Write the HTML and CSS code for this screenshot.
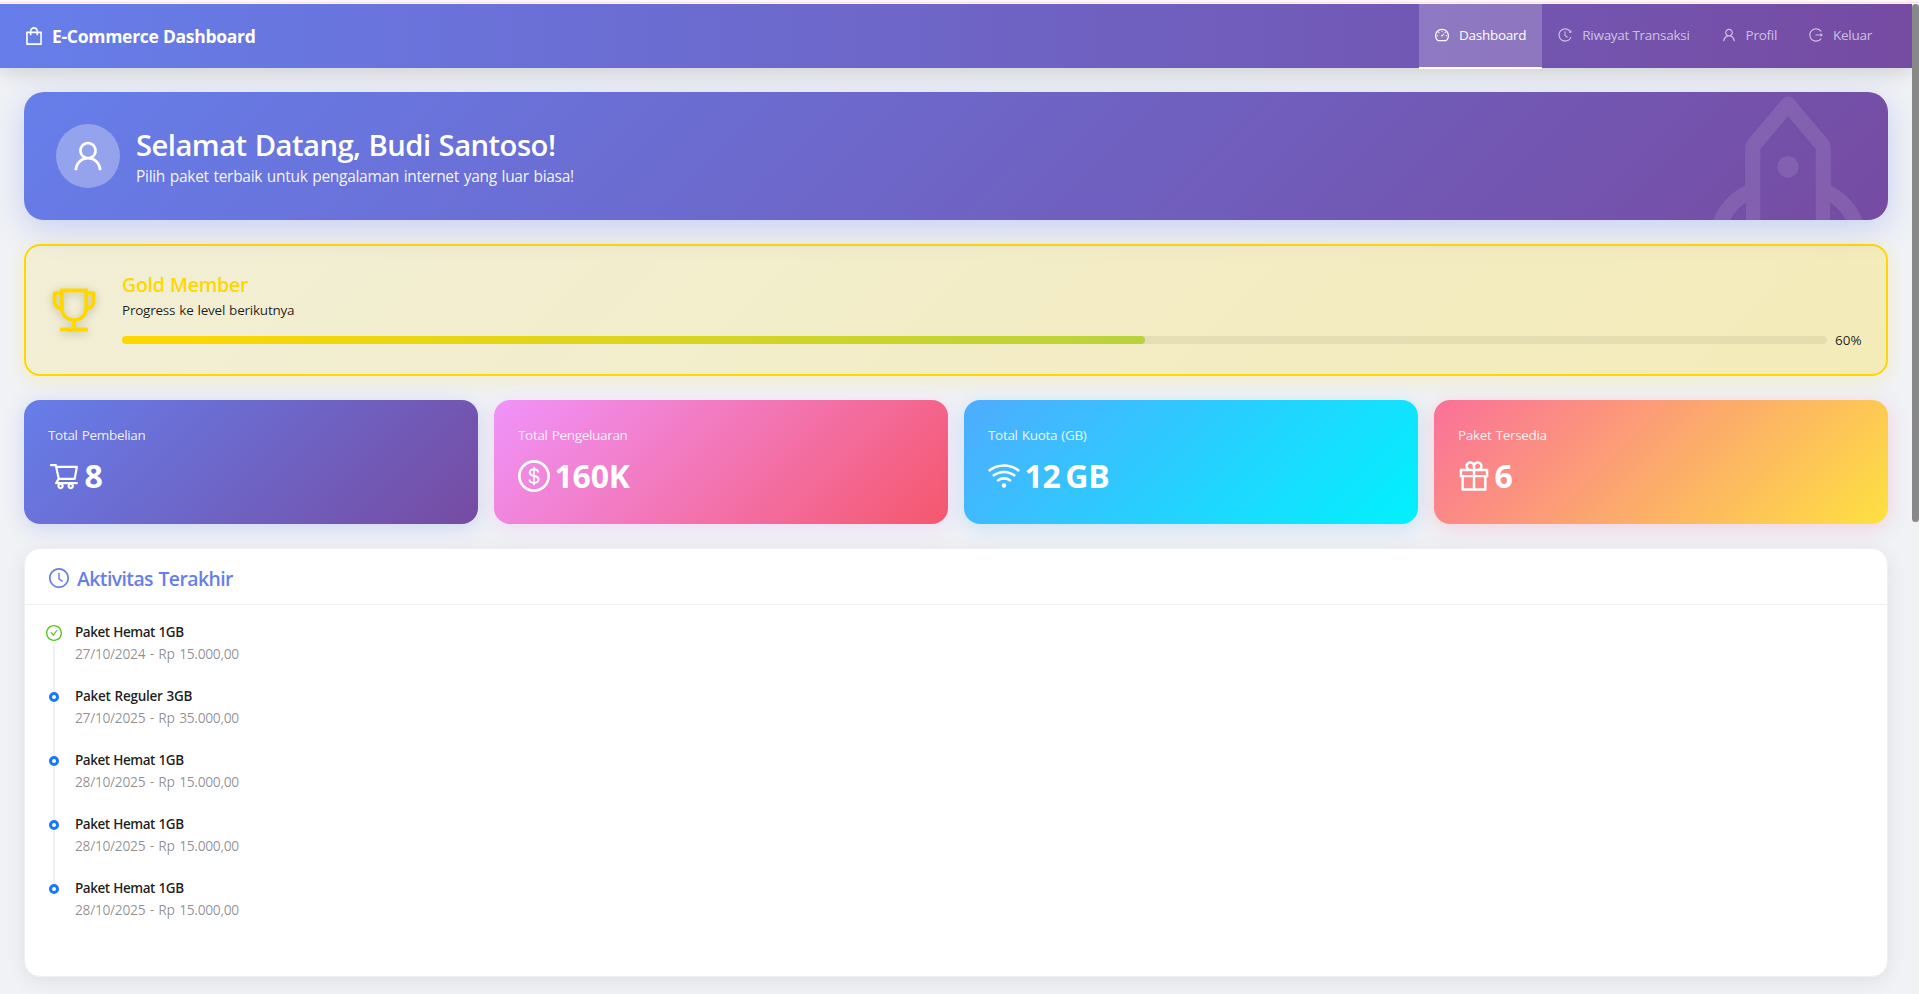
FILE: index.html
```
<!DOCTYPE html>
<html lang="id">
<head>
<meta charset="utf-8">
<title>E-Commerce Dashboard</title>
<link rel="stylesheet" href="styles.css">
</head>
<body>
<div class="topline"></div>
<div class="viewport">
  <div class="page">
    <header class="header">
      <div class="brand">
        <svg class="icon icon-20" viewBox="64 64 896 896"><path d="M832 312H696v-16c0-101.6-82.4-184-184-184s-184 82.4-184 184v16H192c-17.7 0-32 14.3-32 32v536c0 17.7 14.3 32 32 32h640c17.7 0 32-14.3 32-32V344c0-17.7-14.3-32-32-32zm-432-16c0-61.9 50.1-112 112-112s112 50.1 112 112v16H400v-16zm392 544H232V384h96v88c0 4.400 3.600 8 8 8h56c4.400 0 8-3.600 8-8v-88h224v88c0 4.400 3.600 8 8 8h56c4.400 0 8-3.600 8-8v-88h96v456z"/></svg>
        <span>E-Commerce Dashboard</span>
      </div>
      <nav class="menu">
        <a class="menu-item active">
          <svg class="icon icon-14" viewBox="64 64 896 896"><path d="M924.8 385.6a446.700 446.700 0 00-96-142.400 446.700 446.700 0 00-142.400-96C631.100 123.800 572.500 112 512 112s-119.100 11.800-174.400 35.200a446.700 446.700 0 00-142.400 96 446.700 446.700 0 00-96 142.400C75.800 440.900 64 499.500 64 560c0 132.700 58.300 257.700 159.900 343.100l1.700 1.400c5.800 4.800 13.100 7.500 20.600 7.500h531.700c7.500 0 14.800-2.700 20.600-7.500l1.700-1.400C901.700 817.700 960 692.700 960 560c0-60.500-11.900-119.100-35.200-174.400zM761.400 836H262.600A371.120 371.120 0 01140 560c0-99.400 38.700-192.800 109-263 70.300-70.300 163.700-109 263-109 99.400 0 192.800 38.700 263 109 70.300 70.300 109 163.700 109 263 0 105.600-44.500 205.500-122.600 276zM623.500 421.500a8.030 8.030 0 00-11.300 0L527.700 506c-18.700-5-39.400-.2-54.100 14.500a55.950 55.950 0 000 79.200 55.950 55.950 0 0079.200 0 55.870 55.870 0 0014.500-54.100l84.500-84.500c3.100-3.100 3.100-8.200 0-11.300l-28.300-28.300zM490 320h44c4.400 0 8-3.600 8-8v-80c0-4.400-3.600-8-8-8h-44c-4.400 0-8 3.600-8 8v80c0 4.400 3.600 8 8 8zm260 218v44c0 4.400 3.600 8 8 8h80c4.400 0 8-3.600 8-8v-44c0-4.400-3.600-8-8-8h-80c-4.400 0-8 3.600-8 8zm12.700-197.200l-31.100-31.100a8.030 8.030 0 00-11.300 0l-56.600 56.600a8.030 8.030 0 000 11.300l31.100 31.100c3.100 3.100 8.200 3.100 11.300 0l56.600-56.600c3.100-3.100 3.100-8.200 0-11.300zm-458.600-31.100a8.030 8.030 0 00-11.300 0l-31.100 31.100a8.030 8.030 0 000 11.300l56.600 56.600c3.100 3.100 8.200 3.100 11.300 0l31.100-31.100c3.100-3.100 3.100-8.200 0-11.300l-56.600-56.600zM262 530h-80c-4.400 0-8 3.600-8 8v44c0 4.400 3.600 8 8 8h80c4.400 0 8-3.600 8-8v-44c0-4.400-3.600-8-8-8z"/></svg>
          <span>Dashboard</span>
        </a>
        <a class="menu-item">
          <svg class="icon icon-14" viewBox="64 64 896 896"><path d="M536.1 273H488c-4.400 0-8 3.600-8 8v275.300c0 2.600 1.200 5 3.300 6.500l165.300 120.700c3.600 2.600 8.600 1.900 11.200-1.700l28.600-39c2.700-3.700 1.900-8.700-1.700-11.200L544.100 528.500V281c0-4.400-3.600-8-8-8zm219.800 75.200l156.800 38.300c5 1.200 9.900-2.600 9.900-7.700l.8-161.500c0-6.700-7.700-10.500-12.900-6.300L752.900 334.100a8 8 0 003 14.100zm167.700 301.100l-56.700-19.500a8 8 0 00-10.100 4.800c-1.900 5.100-3.900 10.100-6 15.100-17.800 42.100-43.300 80-75.900 112.500a353 353 0 01-112.500 75.900 352.180 352.180 0 01-137.700 27.800c-47.800 0-94.100-9.300-137.700-27.800a353 353 0 01-112.500-75.900c-32.500-32.500-58-70.400-75.900-112.500A353.440 353.440 0 01171 512c0-47.800 9.300-94.200 27.800-137.800 17.800-42.100 43.300-80 75.900-112.500a353 353 0 01112.500-75.900C430.600 167.300 477 158 524.800 158s94.100 9.300 137.700 27.800A353 353 0 01775 261.700c10.200 10.300 19.800 21 28.600 32.300l59.800-46.800C784.700 146.600 662.200 81.900 524.600 82 285 82.100 92.600 276.700 95 516.400 97.400 751.900 288.900 942 524.800 942c185.500 0 343.500-117.600 403.700-282.300 1.500-4.200-.7-8.900-4.900-10.400z"/></svg>
          <span>Riwayat Transaksi</span>
        </a>
        <a class="menu-item">
          <svg class="icon icon-14" viewBox="64 64 896 896"><use href="#user"/></svg>
          <span>Profil</span>
        </a>
        <a class="menu-item">
          <svg class="icon icon-14" viewBox="64 64 896 896"><path d="M868 732h-70.300c-4.800 0-9.300 2.100-12.300 5.800-7 8.500-14.500 16.700-22.400 24.500a353.840 353.840 0 01-112.700 75.900A352.800 352.800 0 01512.400 866c-47.900 0-94.300-9.400-137.900-27.800a353.840 353.840 0 01-112.700-75.900 353.280 353.280 0 01-76-112.500C167.300 606.200 158 559.900 158 512s9.400-94.200 27.800-137.800c17.800-42.100 43.400-80 76-112.500s70.500-58.100 112.700-75.900c43.600-18.400 90-27.800 137.900-27.800 47.900 0 94.300 9.300 137.900 27.800 42.200 17.800 80.100 43.400 112.700 75.900 7.900 7.900 15.300 16.100 22.400 24.500 3 3.700 7.600 5.800 12.300 5.800H868c6.300 0 10.200-7 6.700-12.300C798 160.500 663.800 81.600 511.300 82 271.700 82.600 79.600 277.100 82 516.400 84.400 751.900 276.200 942 512.400 942c152.100 0 285.700-78.800 362.300-197.700 3.400-5.300-.4-12.300-6.700-12.300zm88.900-226.300L815 393.700c-5.300-4.200-13-.4-13 6.300v76H488c-4.400 0-8 3.600-8 8v56c0 4.400 3.600 8 8 8h314v76c0 6.700 7.800 10.500 13 6.300l141.900-112a8 8 0 000-12.600z"/></svg>
          <span>Keluar</span>
        </a>
      </nav>
    </header>

    <main class="content">
      <section class="welcome">
        <svg class="rocket" viewBox="64 64 896 896"><path fill-rule="evenodd" d="M864 736c0-111.600-65.400-208-160-252.900V317.300c0-15.100-5.300-29.700-15.100-41.200L536.500 95.400C530.100 87.800 521 84 512 84s-18.100 3.800-24.500 11.400L335.100 276.100a63.970 63.970 0 00-15.100 41.200v165.800C225.400 528 160 624.400 160 736h704zM762.300 621.400c9.400 14.600 17 30.300 22.500 46.600H700V558.700a211.600 211.600 0 0162.300 62.700zM388 483.100V318.800l124-147 124 147V668H388V483.100zM239.200 668c5.500-16.300 13.100-32 22.500-46.600 16.300-25.200 37.500-46.500 62.300-62.700V668h-84.800zM464 400a48 48 0 1096 0 48 48 0 10-96 0z"/></svg>
        <div class="avatar">
          <svg class="icon icon-32" viewBox="64 64 896 896"><path id="user" d="M858.500 763.600a374 374 0 00-80.600-119.500 375.630 375.630 0 00-119.500-80.600c-.4-.2-.8-.3-1.200-.5C719.500 518 760 444.700 760 362c0-137-111-248-248-248S264 225 264 362c0 82.700 40.500 156 102.800 201.100-.4.2-.8.3-1.200.5-44.800 18.900-85 46-119.500 80.600a375.630 375.630 0 00-80.600 119.500A371.700 371.700 0 00136 901.800a8 8 0 008 8.200h60c4.400 0 7.900-3.500 8-7.800 2-77.200 33-149.500 87.800-204.300 56.700-56.700 132-87.900 212.200-87.900s155.500 31.200 212.200 87.900C779 752.700 810 825 812 902.200c.1 4.400 3.600 7.800 8 7.800h60a8 8 0 008-8.200c-1-47.800-10.900-94.300-29.500-138.200zM512 534c-45.900 0-89.100-17.900-121.600-50.400S340 407.900 340 362c0-45.900 17.900-89.100 50.400-121.600S466.100 190 512 190s89.100 17.900 121.600 50.400S684 316.100 684 362c0 45.900-17.900 89.100-50.400 121.600S557.900 534 512 534z"/></svg>
        </div>
        <div>
          <h1 class="welcome-title">Selamat Datang, Budi Santoso!</h1>
          <p class="welcome-text">Pilih paket terbaik untuk pengalaman internet yang luar biasa!</p>
        </div>
      </section>

      <section class="member">
        <svg class="icon trophy" viewBox="64 64 896 896"><path d="M868 160h-92v-40c0-4.400-3.600-8-8-8H256c-4.400 0-8 3.600-8 8v40h-92a44 44 0 00-44 44v148c0 81.700 60 149.600 138.200 162C265.700 630.200 359 721.700 476 734.500v105.200H280c-17.700 0-32 14.300-32 32V904c0 4.400 3.600 8 8 8h512c4.400 0 8-3.600 8-8v-32.300c0-17.700-14.300-32-32-32H548V734.500C665 721.700 758.300 630.200 773.800 514 852 501.600 912 433.700 912 352V204a44 44 0 00-44-44zM184 352V232h64v207.600a91.990 91.990 0 01-64-87.600zm520 128c0 49.100-19.100 95.400-53.900 130.100-34.800 34.800-81 53.900-130.100 53.900h-16c-49.100 0-95.400-19.100-130.100-53.900-34.800-34.800-53.900-81-53.900-130.100V184h384v296zm136-128c0 41-26.900 75.800-64 87.600V232h64v120z"/></svg>
        <div class="member-body">
          <h2 class="member-title">Gold Member</h2>
          <p class="member-text">Progress ke level berikutnya</p>
          <div class="progress">
            <div class="progress-track"><div class="progress-fill" style="width:60%"></div></div>
            <span class="progress-value">60%</span>
          </div>
        </div>
      </section>

      <section class="stats">
        <div class="stat purple">
          <p class="stat-label">Total Pembelian</p>
          <div class="stat-value">
            <svg class="icon icon-32" viewBox="0 0 1024 1024"><path d="M922.900 701.900H327.400l29.900-60.900 496.800-.9c16.800 0 31.200-12 34.200-28.600l68.800-385.100c1.800-10.100-.9-20.500-7.500-28.400a34.990 34.990 0 00-26.600-12.500l-632-2.100-5.400-25.400c-3.400-16.200-18-28-34.600-28H96.500a35.300 35.300 0 100 70.600h125.900L246 312.800l58.100 281.300-74.800 122.100a34.960 34.960 0 00-3 36.800c6 11.900 18.100 19.400 31.500 19.400h62.800a102.430 102.430 0 00-20.600 61.700c0 56.600 46 102.600 102.600 102.600s102.600-46 102.600-102.600c0-22.300-7.400-44-20.600-61.700h161.100a102.430 102.430 0 00-20.600 61.700c0 56.600 46 102.600 102.600 102.600s102.600-46 102.600-102.600c0-22.300-7.400-44-20.600-61.700H923c19.400 0 35.300-15.800 35.300-35.300a35.420 35.420 0 00-35.400-35.200zM305.700 253l575.800 1.900-56.400 315.800-452.300.8L305.700 253zm96.900 612.700c-17.400 0-31.600-14.200-31.600-31.600 0-17.400 14.200-31.600 31.600-31.600s31.600 14.200 31.600 31.600a31.600 31.600 0 01-31.600 31.600zm325.100 0c-17.400 0-31.600-14.200-31.600-31.600 0-17.400 14.200-31.600 31.600-31.600s31.600 14.200 31.600 31.600a31.600 31.600 0 01-31.600 31.600z"/></svg>
            <span>8</span>
          </div>
        </div>
        <div class="stat pink">
          <p class="stat-label">Total Pengeluaran</p>
          <div class="stat-value">
            <svg class="icon icon-32" viewBox="64 64 896 896"><path d="M512 64C264.600 64 64 264.600 64 512s200.600 448 448 448 448-200.600 448-448S759.400 64 512 64zm0 820c-205.400 0-372-166.600-372-372s166.600-372 372-372 372 166.600 372 372-166.600 372-372 372zm47.700-395.200l-25.400-5.900V348.600c38 5.200 61.500 29 65.500 58.200.5 4 3.900 6.900 7.900 6.900h44.900c4.700 0 8.400-4.100 8-8.800-6.100-62.300-57.400-102.300-125.900-109.200V263c0-4.400-3.600-8-8-8h-28.100c-4.400 0-8 3.600-8 8v33c-70.800 6.900-126.200 46-126.200 119 0 67.600 49.800 100.200 102.100 112.700l24.700 6.300v142.700c-44.200-5.900-69-29.500-74.100-61.300-.6-3.800-4-6.600-7.900-6.600H363c-4.700 0-8.400 4-8 8.700 4.500 55 46.200 105.600 135.200 112.100V761c0 4.400 3.600 8 8 8h28.400c4.400 0 8-3.600 8-8.100l-.2-31.700c78.300-6.900 134.300-48.800 134.300-124-.1-69.400-44.200-100.400-109-116.400zm-68.600-16.200c-5.600-1.600-10.300-3.100-15-5-33.800-12.200-49.500-31.900-49.500-57.300 0-36.300 27.500-57 64.500-61.700v124zM534.300 677V543.300c3.100.9 5.900 1.600 8.800 2.200 47.300 14.400 63.200 34.400 63.200 65.100 0 39.100-29.400 62.600-72 66.400z"/></svg>
            <span>160K</span>
          </div>
        </div>
        <div class="stat blue">
          <p class="stat-label">Total Kuota (GB)</p>
          <div class="stat-value">
            <svg class="icon icon-32" viewBox="64 64 896 896"><path d="M723 620.500C666.800 571.600 593.400 542 513 542s-153.800 29.600-210.100 78.600a8.100 8.100 0 00-.8 11.200l36 42.900c2.900 3.400 8 3.800 11.400.9C393.100 637.200 450.300 614 513 614s119.900 23.200 163.500 61.500c3.400 2.900 8.500 2.500 11.400-.9l36-42.900c2.800-3.300 2.400-8.300-.9-11.200zm117.400-140.100C751.700 406.500 637.600 362 513 362s-238.700 44.500-327.500 118.400a8.050 8.050 0 00-1 11.300l36 42.900c2.800 3.400 7.900 3.800 11.200 1C308 472.200 406.100 434 513 434s205 38.200 281.200 101.600c3.400 2.800 8.400 2.400 11.200-1l36-42.900c2.800-3.400 2.400-8.500-1-11.300zm116.700-139C835.700 241.800 680.300 182 511 182c-168.200 0-322.600 59-443.700 157.400a8 8 0 00-1.100 11.400l36 42.900c2.800 3.300 7.800 3.800 11.100 1.100C222 306.300 360.300 254 511 254c151.800 0 291 53.500 400 142.700 3.400 2.800 8.400 2.300 11.200-1.100l36-42.900c2.900-3.400 2.400-8.500-1.100-11.300zM448 778a64 64 0 10128 0 64 64 0 10-128 0z"/></svg>
            <span>12</span><span>GB</span>
          </div>
        </div>
        <div class="stat sunset">
          <p class="stat-label">Paket Tersedia</p>
          <div class="stat-value">
            <svg class="icon icon-32" viewBox="64 64 896 896"><path d="M880 310H732.400c13.600-21.400 21.600-46.800 21.600-74 0-76.100-61.900-138-138-138-41.400 0-78.700 18.400-104 47.400-25.300-29-62.600-47.400-104-47.400-76.100 0-138 61.900-138 138 0 27.200 7.900 52.600 21.600 74H144c-17.700 0-32 14.300-32 32v200c0 4.400 3.600 8 8 8h40v344c0 17.700 14.300 32 32 32h640c17.700 0 32-14.300 32-32V550h40c4.400 0 8-3.600 8-8V342c0-17.700-14.300-32-32-32zm-334-74c0-38.600 31.400-70 70-70s70 31.400 70 70-31.400 70-70 70h-70v-70zm-138-70c38.600 0 70 31.400 70 70v70h-70c-38.600 0-70-31.400-70-70s31.400-70 70-70zM180 482V378h298v104H180zm48 68h250v308H228V550zm568 308H546V550h250v308zm48-376H546V378h298v104z"/></svg>
            <span>6</span>
          </div>
        </div>
      </section>

      <section class="activity">
        <div class="activity-head">
          <svg class="icon icon-20" viewBox="64 64 896 896"><path d="M512 64C264.600 64 64 264.600 64 512s200.600 448 448 448 448-200.600 448-448S759.400 64 512 64zm0 820c-205.400 0-372-166.600-372-372s166.600-372 372-372 372 166.600 372 372-166.600 372-372 372z"/><path d="M686.700 638.600L544.100 535.500V288c0-4.400-3.600-8-8-8H488c-4.400 0-8 3.600-8 8v275.400c0 2.600 1.200 5 3.300 6.500l165.400 120.600c3.600 2.600 8.600 1.800 11.200-1.700l28.600-39c2.600-3.700 1.800-8.700-1.800-11.200z"/></svg>
          <h2 class="activity-title">Aktivitas Terakhir</h2>
        </div>
        <ul class="timeline">
          <li class="event">
            <div class="rail done"><svg class="icon icon-16" viewBox="64 64 896 896"><path d="M699 353h-46.900c-10.200 0-19.900 4.900-25.900 13.300L469 584.300l-71.200-98.800c-6-8.300-15.600-13.300-25.900-13.300H325c-6.500 0-10.300 7.400-6.500 12.700l124.600 172.800a31.800 31.800 0 0051.700 0l210.600-292c3.900-5.300.1-12.700-6.400-12.700z"/><path d="M512 64C264.600 64 64 264.600 64 512s200.600 448 448 448 448-200.600 448-448S759.400 64 512 64zm0 820c-205.400 0-372-166.600-372-372s166.600-372 372-372 372 166.600 372 372-166.600 372-372 372z"/></svg></div>
            <div><p class="event-name">Paket Hemat 1GB</p><p class="event-info">27/10/2024 - Rp 15.000,00</p></div>
          </li>
          <li class="event">
            <div class="rail"><i class="dot"></i></div>
            <div><p class="event-name wide">Paket Reguler 3GB</p><p class="event-info">27/10/2025 - Rp 35.000,00</p></div>
          </li>
          <li class="event">
            <div class="rail"><i class="dot"></i></div>
            <div><p class="event-name">Paket Hemat 1GB</p><p class="event-info">28/10/2025 - Rp 15.000,00</p></div>
          </li>
          <li class="event">
            <div class="rail"><i class="dot"></i></div>
            <div><p class="event-name">Paket Hemat 1GB</p><p class="event-info">28/10/2025 - Rp 15.000,00</p></div>
          </li>
          <li class="event">
            <div class="rail"><i class="dot"></i></div>
            <div><p class="event-name">Paket Hemat 1GB</p><p class="event-info">28/10/2025 - Rp 15.000,00</p></div>
          </li>
        </ul>
      </section>
    </main>
  </div>
  <div class="scrollbar"><div class="thumb"></div></div>
</div>
</body>
</html>
```
FILE: styles.css
```
* { box-sizing: border-box; }
body {
  margin: 0;
  height: 994px;
  overflow: hidden;
  background: #f0f2f5;
  color: rgba(0, 0, 0, 0.88);
  font: 13.5px/22px "Open Sans", "Noto Sans", sans-serif;
}
h1, h2, p, ul { margin: 0; padding: 0; }
ul { list-style: none; }
.icon { display: block; flex: none; fill: currentColor; }
.icon-14 { width: 14px; height: 14px; }
.icon-16 { width: 16px; height: 16px; }
.icon-20 { width: 20px; height: 20px; }
.icon-32 { width: 32px; height: 32px; }

.topline {
  height: 4px;
  background: linear-gradient(#fdf7f9 0 2px, #f3dfe5 2px 3px, #fdf7f9 3px 4px);
}
.viewport { display: flex; height: 990px; overflow: hidden; }
.page { flex: 1; min-width: 0; overflow: hidden; }
.scrollbar { width: 7px; background: #f1f1f1; }
.thumb { height: 518px; border-radius: 4px; background: #888; }

/* Header */
.header {
  display: flex;
  justify-content: space-between;
  height: 64px;
  padding: 0 24px;
  background: linear-gradient(90deg, #667eea 0%, #764ba2 100%);
  box-shadow: 0 4px 20px rgba(0, 0, 0, 0.15);
  color: #fff;
}
.brand {
  display: flex;
  align-items: center;
  gap: 8px;
  font-size: 17.5px;
  font-weight: 700;
  letter-spacing: -0.28px;
}
.menu { display: flex; height: 65px; letter-spacing: -0.27px; }
.menu-item {
  display: flex;
  align-items: center;
  gap: 10px;
  padding: 0 16px 3px;
  color: rgba(255, 255, 255, 0.65);
}
.menu-item.active {
  color: #fff;
  background: rgba(255, 255, 255, 0.2);
  box-shadow: inset 0 -2px #fff;
}

.content { display: flex; flex-direction: column; gap: 24px; padding: 23px 24px 24px; margin-top: 1px; }

/* Welcome banner */
.welcome {
  position: relative;
  display: flex;
  align-items: center;
  gap: 16px;
  height: 128px;
  padding: 0 32px;
  overflow: hidden;
  border-radius: 20px;
  background: linear-gradient(135deg, #667eea 0%, #764ba2 100%);
  box-shadow: 0 8px 32px rgba(102, 126, 234, 0.3);
  color: #fff;
}
.rocket {
  position: absolute;
  top: 0;
  right: 0;
  width: 200px;
  height: 200px;
  fill: #fff;
  opacity: 0.1;
}
.avatar {
  display: grid;
  place-items: center;
  width: 64px;
  height: 64px;
  border-radius: 50%;
  background: rgba(255, 255, 255, 0.3);
}
.welcome-title { padding-top: 1px; font-size: 29.2px; line-height: 38px; font-weight: 600; letter-spacing: -0.52px; word-spacing: 1px; }
.welcome-text { font-size: 15.5px; line-height: 24px; letter-spacing: -0.3px; word-spacing: 1px; color: rgba(255, 255, 255, 0.95); }

/* Membership */
.member {
  display: flex;
  align-items: center;
  gap: 24px;
  height: 132px;
  padding: 24px;
  border: 2px solid #ffd700;
  border-radius: 16px;
  background: linear-gradient(135deg, rgba(255, 215, 0, 0.125), rgba(255, 215, 0, 0.25));
  box-shadow: 0 4px 20px rgba(255, 215, 0, 0.2);
}
.trophy { width: 48px; height: 48px; color: #ffd700; filter: drop-shadow(0 2px 4px rgba(0, 0, 0, 0.2)); }
.member-body { flex: 1; height: 80px; }
.member-title { padding-top: 1px; font-size: 19.5px; line-height: 28px; font-weight: 600; letter-spacing: -0.24px; word-spacing: 0.5px; color: #ffd700; }
.member-text { letter-spacing: -0.22px; word-spacing: 0.7px; }
.progress { display: flex; align-items: center; gap: 8px; margin-top: 8px; }
.progress-track { flex: 1; height: 8px; border-radius: 4px; background: rgba(0, 0, 0, 0.06); }
.progress-fill { height: 8px; border-radius: 4px; background: linear-gradient(90deg, #ffd700, #b8d33d); }
.progress-value { width: 27px; white-space: nowrap; }

/* Statistics */
.stats { display: grid; grid-template-columns: repeat(4, 1fr); gap: 16px; }
.stat { height: 124px; padding: 24px; border-radius: 16px; color: #fff; }
.purple { background: linear-gradient(135deg, #667eea, #764ba2); box-shadow: 0 4px 20px rgba(102, 126, 234, 0.25); }
.pink { background: linear-gradient(135deg, #f093fb, #f5576c); box-shadow: 0 4px 20px rgba(240, 147, 251, 0.25); }
.blue { background: linear-gradient(135deg, #4facfe, #00f2fe); box-shadow: 0 4px 20px rgba(79, 172, 254, 0.25); }
.sunset { background: linear-gradient(135deg, #fa709a, #fee140); box-shadow: 0 4px 20px rgba(250, 112, 154, 0.25); }
.stat-label { letter-spacing: -0.33px; word-spacing: 1px; color: rgba(255, 255, 255, 0.9); }
.stat-value {
  display: flex;
  align-items: center;
  gap: 4.5px;
  margin-top: 6px;
  font-size: 32px;
  line-height: 48px;
  font-weight: 700;
  letter-spacing: -0.2px;
}

/* Recent activity */
.activity {
  height: 429px;
  border: 1px solid #f0f0f0;
  border-radius: 16px;
  background: #fff;
  box-shadow: 0 4px 20px rgba(0, 0, 0, 0.08);
}
.activity-head {
  display: flex;
  align-items: center;
  gap: 8px;
  height: 56px;
  padding: 2px 24px 0;
  border-bottom: 1px solid #f0f0f0;
  color: #667eea;
}
.activity-title { padding-top: 1px; font-size: 19.4px; line-height: 27px; font-weight: 600; letter-spacing: -0.57px; word-spacing: 1px; }
.timeline { padding: 16px 21px; }
.event { display: flex; gap: 13px; height: 64px; }
.rail {
  display: flex;
  flex-direction: column;
  align-items: center;
  width: 16px;
  padding-top: 7px;
}
.rail::after { content: ""; flex: 1; width: 2px; margin-bottom: -7px; background: #f0f0f0; }
.rail.done { padding-top: 4px; gap: 4px; color: #52c41a; }
.event:last-child .rail::after { display: none; }
.dot { width: 10px; height: 10px; border: 3px solid #1677ff; border-radius: 50%; background: #fff; }
.event-name { font-weight: 600; letter-spacing: -0.48px; word-spacing: 0.7px; }
.event-name.wide { letter-spacing: -0.27px; }
.event-info { font-size: 13.8px; letter-spacing: -0.3px; word-spacing: 1.2px; color: rgba(0, 0, 0, 0.45); }
```
